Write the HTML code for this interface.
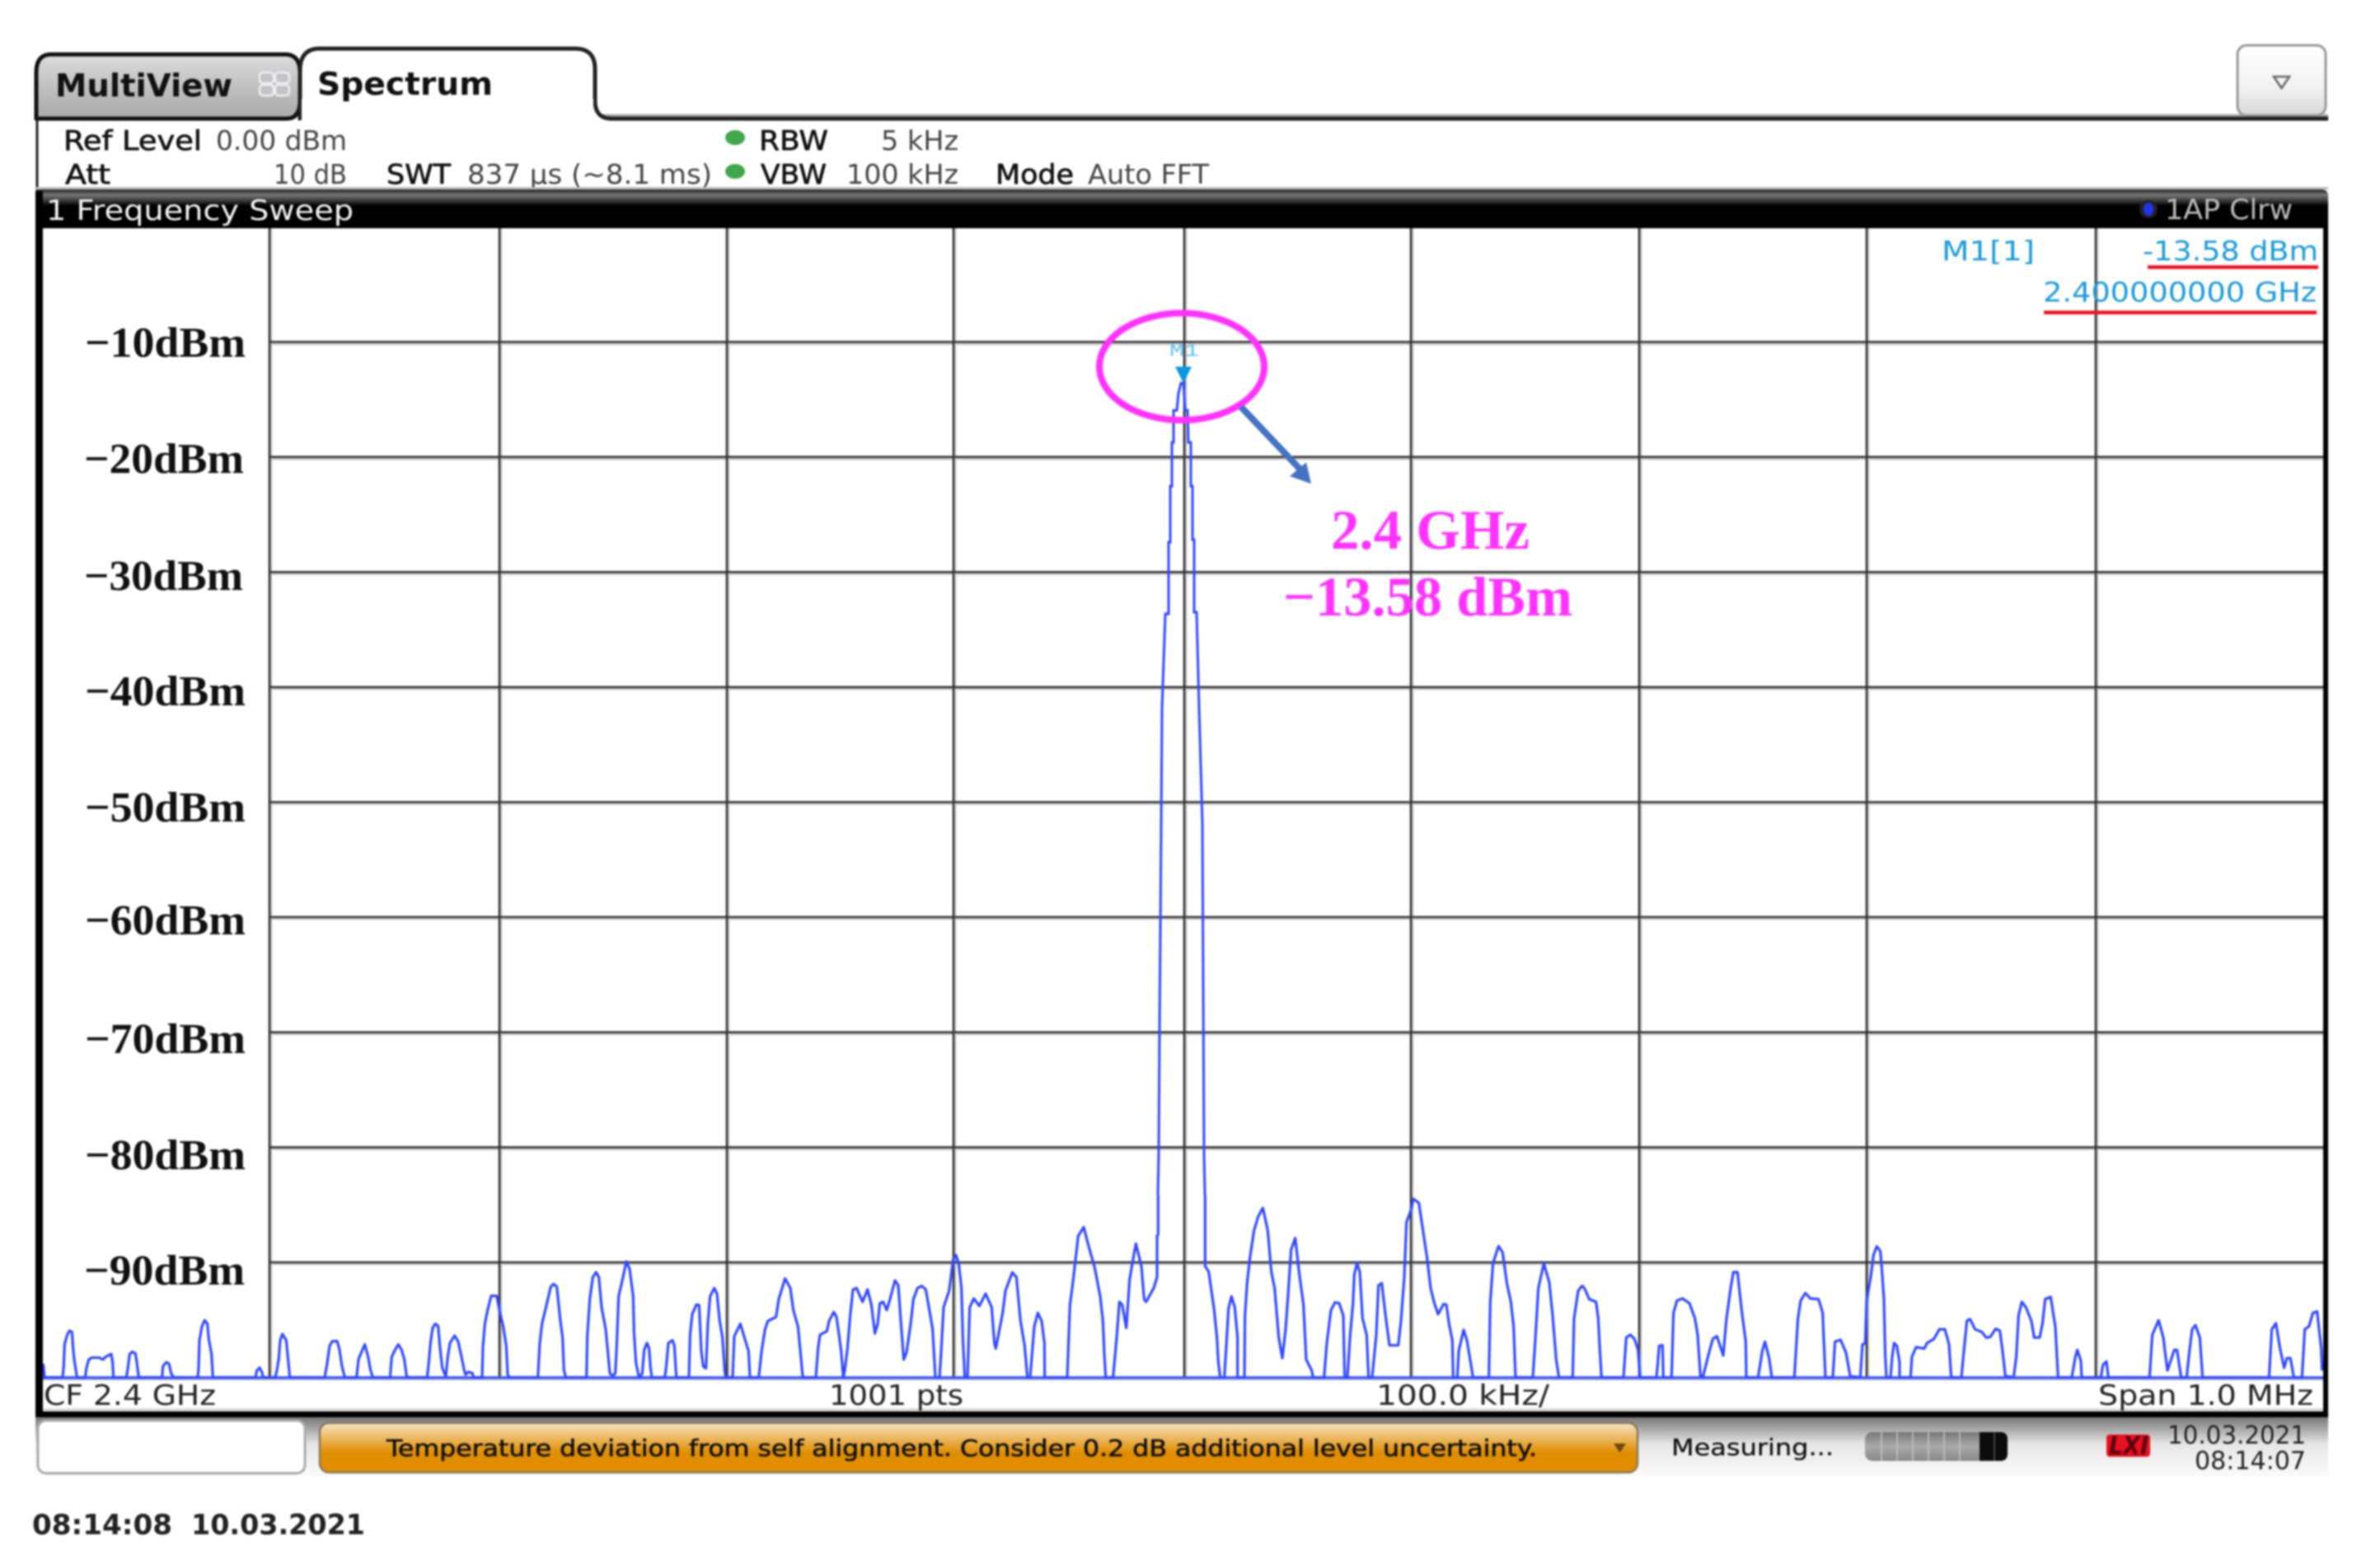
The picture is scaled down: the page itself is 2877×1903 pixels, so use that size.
<!DOCTYPE html>
<html>
<head>
<meta charset="utf-8">
<title>Spectrum</title>
<style>
html,body{margin:0;padding:0;background:#fff;width:2877px;height:1903px;overflow:hidden}
svg{display:block;filter:blur(1px)}
text{font-family:"DejaVu Sans","Liberation Sans",sans-serif;white-space:pre}
.lb{font-size:33px;fill:#111;stroke:#111;stroke-width:.7px}
.val{font-size:33px;fill:#444}
.bot{font-size:34px;fill:#222}
.cy{font-size:33px;fill:#1a9ad8}
.yl{font-family:"Liberation Serif",serif;font-weight:700;font-size:52px;fill:#111}
.mg{font-family:"Liberation Serif",serif;font-weight:700;font-size:68px;fill:#ff33ff}
.st{font-size:28px;fill:#111;stroke:#111;stroke-width:.6px}
.tr{fill:none;stroke:#3048ff;stroke-width:9.5;stroke-linejoin:round}
</style>
</head>
<body>
<svg xmlns="http://www.w3.org/2000/svg" width="2877" height="1903" viewBox="0 0 2877 1903">
<defs>
<linearGradient id="gTab" x1="0" y1="0" x2="0" y2="1"><stop offset="0" stop-color="#dcdcdc"/><stop offset=".5" stop-color="#c0c0c0"/><stop offset="1" stop-color="#a8a8a8"/></linearGradient>
<linearGradient id="gBand" x1="0" y1="0" x2="0" y2="1"><stop offset="0" stop-color="#222"/><stop offset=".14" stop-color="#777"/><stop offset=".42" stop-color="#000"/><stop offset="1" stop-color="#000"/></linearGradient>
<linearGradient id="gStat" x1="0" y1="0" x2="0" y2="1"><stop offset="0" stop-color="#777"/><stop offset=".45" stop-color="#e6e6e6"/><stop offset="1" stop-color="#fbfbfb"/></linearGradient>
<linearGradient id="gOr" x1="0" y1="0" x2="0" y2="1"><stop offset="0" stop-color="#f8e4c4"/><stop offset=".6" stop-color="#e08e00"/><stop offset="1" stop-color="#e08e00"/></linearGradient>
<linearGradient id="gBtn" x1="0" y1="0" x2="0" y2="1"><stop offset="0" stop-color="#fff"/><stop offset=".6" stop-color="#f2f2f2"/><stop offset="1" stop-color="#d8d8d8"/></linearGradient>
<linearGradient id="gPr" x1="0" y1="0" x2="0" y2="1"><stop offset="0" stop-color="#777"/><stop offset=".5" stop-color="#aaa"/><stop offset="1" stop-color="#888"/></linearGradient>
</defs>
<rect width="2877" height="1903" fill="#fff"/>

<!-- tabs -->
<path d="M720 143H2825" stroke="#aaa" stroke-width="3" fill="none" transform="translate(0,-3)"/>
<path d="M44 146V88Q44 66 62 66H346Q364 66 364 88V122Q364 144 348 144H44Z" fill="url(#gTab)" stroke="#111" stroke-width="5"/>
<path d="M364 146V86Q364 60 386 59H698Q722 59 722 84V122Q722 144 742 144H2825" fill="#fff" stroke="#222" stroke-width="5"/>
<path d="M366 146V120H720V146Z" fill="#fff"/>
<text x="67" y="117" font-size="38" font-weight="700" fill="#111" textLength="215" lengthAdjust="spacingAndGlyphs">MultiView</text>
<text x="385" y="115" font-size="38" font-weight="700" fill="#111" textLength="213" lengthAdjust="spacingAndGlyphs">Spectrum</text>
<g fill="#c4c4c8" stroke="#eeeef4" stroke-width="2.5"><rect x="315" y="88" width="17" height="13" rx="4"/><rect x="334" y="88" width="17" height="13" rx="4"/><rect x="315" y="103" width="17" height="13" rx="4"/><rect x="334" y="103" width="17" height="13" rx="4"/></g>

<!-- button -->
<rect x="2715" y="55" width="107" height="85" rx="11" fill="url(#gBtn)" stroke="#999" stroke-width="3"/>
<path d="M2759 93H2778L2768.500 107Z" fill="none" stroke="#666" stroke-width="2.500"/>

<!-- settings -->
<path d="M45 146V232" stroke="#222" stroke-width="3"/>
<text class="lb" x="77" y="182" textLength="168" lengthAdjust="spacingAndGlyphs">Ref Level</text>
<text class="val" x="262" y="182" textLength="159" lengthAdjust="spacingAndGlyphs">0.00 dBm</text>
<ellipse cx="892" cy="167" rx="12" ry="9" fill="#3fa64a"/>
<text class="lb" x="921" y="182" textLength="84" lengthAdjust="spacingAndGlyphs">RBW</text>
<text class="val" x="1069" y="182" textLength="94" lengthAdjust="spacingAndGlyphs">5 kHz</text>
<text class="lb" x="79" y="223" textLength="55" lengthAdjust="spacingAndGlyphs">Att</text>
<text class="val" x="332" y="223" textLength="89" lengthAdjust="spacingAndGlyphs">10 dB</text>
<text class="lb" x="469" y="223" textLength="78" lengthAdjust="spacingAndGlyphs">SWT</text>
<text class="val" x="567" y="223" textLength="297" lengthAdjust="spacingAndGlyphs">837 µs (~8.1 ms)</text>
<ellipse cx="892" cy="208" rx="12" ry="9" fill="#3fa64a"/>
<text class="lb" x="923" y="223" textLength="80" lengthAdjust="spacingAndGlyphs">VBW</text>
<text class="val" x="1027" y="223" textLength="136" lengthAdjust="spacingAndGlyphs">100 kHz</text>
<text class="lb" x="1208" y="223" textLength="95" lengthAdjust="spacingAndGlyphs">Mode</text>
<text class="val" x="1320" y="223" textLength="147" lengthAdjust="spacingAndGlyphs">Auto FFT</text>

<!-- band -->
<rect x="43" y="227" width="2782" height="3" fill="#bbb"/>
<path d="M43 232Q43 230 50 230H2817Q2825 230 2825 238V277H43Z" fill="url(#gBand)"/>
<text x="56" y="267" font-size="34" fill="#f4f4f4" textLength="373" lengthAdjust="spacingAndGlyphs">1 Frequency Sweep</text>
<circle cx="2607" cy="254" r="11" fill="#222"/><ellipse cx="2607" cy="254" rx="6" ry="8" fill="#2233ee"/>
<text x="2627" y="266" font-size="34" fill="#bbb" textLength="155" lengthAdjust="spacingAndGlyphs">1AP Clrw</text>

<!-- plot -->
<rect x="52" y="277" width="2767" height="1440" fill="#fff"/>
<g stroke="#cfcfcf" stroke-width="3" fill="none">
<path d="M327 557H2819M327 417.500H2819M327 696.500H2819M327 836H2819M327 975.500H2819M327 1115H2819M327 1255H2819M327 1394.500H2819M327 1534H2819M52 1674H2819"/>
<path d="M329 277V1672M608 277V1672M884 277V1672M1159 277V1672M1439 277V1672M1714 277V1672M1991 277V1672M2267 277V1672M2545 277V1672"/>
</g>
<g stroke="#333" stroke-width="2.600" fill="none">
<path d="M327 415H2819M327 554.600H2819M327 694.300H2819M327 833.900H2819M327 973.500H2819M327 1113H2819M327 1252.800H2819M327 1392.400H2819M327 1532H2819M52 1672H2819"/>
<path d="M327 277V1672M606 277V1672M882 277V1672M1157 277V1672M1437 277V1672M1712 277V1672M1989 277V1672M2265 277V1672M2543 277V1672"/>
</g>

<!-- y labels -->
<text class="yl" x="103" y="433" textLength="195" lengthAdjust="spacingAndGlyphs">−10dBm</text>
<text class="yl" x="102" y="574" textLength="194" lengthAdjust="spacingAndGlyphs">−20dBm</text>
<text class="yl" x="102" y="716" textLength="193" lengthAdjust="spacingAndGlyphs">−30dBm</text>
<text class="yl" x="103" y="856" textLength="195" lengthAdjust="spacingAndGlyphs">−40dBm</text>
<text class="yl" x="103" y="997" textLength="195" lengthAdjust="spacingAndGlyphs">−50dBm</text>
<text class="yl" x="103" y="1134" textLength="195" lengthAdjust="spacingAndGlyphs">−60dBm</text>
<text class="yl" x="103" y="1278" textLength="195" lengthAdjust="spacingAndGlyphs">−70dBm</text>
<text class="yl" x="103" y="1419" textLength="195" lengthAdjust="spacingAndGlyphs">−80dBm</text>
<text class="yl" x="102" y="1559" textLength="195" lengthAdjust="spacingAndGlyphs">−90dBm</text>

<!-- trace -->
<path d="M52 1672H2819" stroke="#3f55ff" stroke-width="3.500" fill="none"/>
<g transform="scale(.33333)">
<polyline class="tr" transform="translate(120,4350)" points="35,620 38,620 42,665 108,665 112,625 115,545 125,510 133,495 142,500 145,545 150,600 155,630 160,665 190,665 195,630 203,600 215,593 240,593 255,600 265,590 285,580 290,610 293,665 340,665 345,635 352,580 362,572 373,578 378,610 385,665 470,665 473,625 485,610 495,615 503,650 512,665 600,665 603,630 606,530 615,480 625,457 635,470 640,525 650,580 655,665 810,665 815,640 825,630 833,645 838,665 882,665 888,640 895,595 900,530 908,507 922,530 928,590 935,665 1062,665 1070,620 1080,550 1090,533 1107,533 1115,560 1125,625 1135,665 1178,665 1185,600 1195,575 1208,545 1220,590 1228,635 1237,665 1300,665 1306,590 1318,565 1330,545 1342,565 1352,600 1360,660 1367,665 1410,665"/>
<polyline class="tr" transform="translate(1530,4350)" points="0,665 25,665 30,620 37,540 45,485 55,470 65,478 72,560 80,630 90,655 93,660 100,590 108,540 125,513 138,535 150,590 160,640 165,655 175,645 190,650 193,665 225,665 228,555 235,470 245,420 258,368 278,368 290,430 302,480 313,550 318,655 325,665 428,665 435,540 443,470 455,420 475,335 485,325 497,335 510,460 518,520 523,640 530,665 605,665 608,515 617,380 628,300 640,282 650,300 660,410 675,490 683,575 690,650 700,660 710,650 715,550 722,370 738,300 750,243 762,270 775,370 778,500 785,610 795,660 800,665 808,650 815,565 825,540 833,560 838,630 843,665 890,665 895,630 903,540 918,530 925,550 932,665 978,665 982,510 990,435 1005,400 1015,402 1023,570 1030,625 1040,632 1047,465 1055,370 1070,340 1080,360 1090,460 1100,520 1108,640 1112,665 1137,665 1143,515 1165,470 1180,520 1195,570 1200,665 1232,665 1243,565 1255,490 1265,460 1295,445 1305,380 1328,305 1347,340 1358,420 1375,480 1392,660 1395,665 1410,665"/>
<polyline class="tr" transform="translate(2940,4350)" points="0,665 30,665 38,560 45,510 70,497 78,460 95,427 105,445 115,515 122,570 130,665 135,640 145,560 155,440 165,345 178,340 200,390 218,345 232,400 245,505 255,470 263,395 275,390 288,420 300,380 318,312 330,330 340,470 350,600 360,575 375,470 385,380 400,340 415,332 430,345 445,430 455,490 465,665 480,665 485,590 495,410 515,350 530,235 540,220 550,250 560,340 565,520 572,665 582,665 590,410 605,378 625,405 648,360 670,410 680,540 685,560 710,430 720,350 745,283 760,300 775,460 790,550 800,665 810,665 825,480 838,430 852,460 862,540 863,665 945,665 955,400 965,325 985,150 1005,118 1025,195 1045,265 1065,370 1075,460 1080,580 1085,665 1112,665 1125,520 1135,390 1145,400 1160,485 1172,310 1182,250 1195,178 1215,260 1225,380 1232,390 1260,340 1272,300 1272,150 1276,145 1276,0"/>
<polyline class="tr" transform="translate(4350,4350)" points="37,0 37,260 50,280 60,350 70,420 80,520 85,610 92,665 107,665 115,535 122,415 133,370 145,410 155,520 155,665 180,665 182,440 190,320 200,230 215,130 230,80 247,48 265,130 278,280 290,340 305,520 318,595 330,490 340,350 350,200 365,158 380,290 395,400 405,600 425,640 430,665 470,665 480,540 495,420 510,392 525,395 540,440 545,665 555,665 565,510 575,400 580,290 590,250 600,280 610,450 625,510 632,665 645,665 660,510 668,330 680,322 695,450 708,548 740,548 750,460 762,300 770,100 785,60 795,15 815,30 830,130 845,230 858,340 870,390 885,435 905,398 915,400 925,470 937,530 940,665 955,665 960,570 978,492 990,530 1005,620 1012,665 1070,665 1075,390 1085,250 1105,187 1120,210 1135,320 1150,390 1160,480 1167,665 1230,665 1240,510 1250,340 1270,250 1290,320 1302,440 1315,600 1325,665 1375,665 1380,450 1395,350 1410,330"/>
<polyline class="tr" transform="translate(5760,4350)" points="0,330 10,345 25,380 50,390 58,450 65,585 70,665 150,665 160,520 175,510 190,525 203,565 210,665 270,665 275,610 280,550 292,548 295,665 325,665 332,430 345,385 365,378 390,395 410,450 420,510 430,660 440,660 460,580 475,525 490,515 513,585 525,450 540,340 550,282 565,282 580,420 595,535 597,665 640,665 655,570 665,535 680,595 690,665 772,665 785,450 795,385 812,358 830,378 860,380 875,430 885,665 912,665 920,535 940,528 960,575 975,660 1012,665 1020,545 1030,540 1035,385 1050,300 1060,220 1072,188 1085,205 1090,265 1098,380 1103,590 1107,665 1122,665 1128,590 1135,540 1145,550 1155,610 1155,665 1195,665 1200,590 1215,555 1245,560 1255,540 1280,525 1300,490 1320,490 1335,545 1343,665 1380,665 1390,560 1400,460 1410,452"/>
<polyline class="tr" transform="translate(7170,4350)" points="0,450 20,490 45,500 60,520 75,518 95,488 110,495 120,570 130,660 160,665 170,590 178,440 190,390 205,410 225,460 235,520 255,520 265,470 275,380 295,372 312,480 322,665 372,665 385,590 392,565 405,605 408,665 478,665 485,620 498,607 505,665 655,665 665,510 688,457 705,520 720,640 745,565 755,565 770,665 790,665 800,570 810,490 822,475 838,520 848,665 1090,665 1100,490 1115,468 1130,560 1145,630 1155,595 1168,595 1180,665 1210,665 1220,490 1235,480 1250,430 1265,425 1280,560 1283,640"/>
</g>
<polyline fill="none" stroke="#3048ff" stroke-width="3" points="1405,1450 1406,1400 1407,1250 1409,1000 1410,860 1414,745 1418,745 1418,658 1420,658 1420,590 1422,590 1422,537 1424,537 1424,498 1428,498 1430,477 1433,465 1436,465 1438,498 1441,498 1442,537 1445,537 1445,590 1447,590 1447,655 1449,655 1449,743 1452,743 1455,860 1459,1000 1461,1400 1462,1450"/>

<!-- marker -->
<text x="1419" y="432" font-size="22" fill="#5fc3ee" textLength="36" lengthAdjust="spacingAndGlyphs" style="font-family:'Liberation Mono',monospace">M1</text>
<path d="M1426 445H1446L1436 465Z" fill="#0a96e0"/>
<ellipse cx="1434" cy="445" rx="100" ry="65" fill="none" stroke="#ff33ff" stroke-width="8"/>
<path d="M1506 494L1578 570" stroke="#4472c4" stroke-width="8" fill="none"/>
<path d="M1591 587L1585 561L1565 578Z" fill="#4472c4"/>
<text class="mg" x="1615" y="666" textLength="241" lengthAdjust="spacingAndGlyphs">2.4 GHz</text>
<text class="mg" x="1557" y="747" textLength="351" lengthAdjust="spacingAndGlyphs">−13.58 dBm</text>

<!-- marker readout -->
<text class="cy" x="2356" y="316" textLength="113" lengthAdjust="spacingAndGlyphs">M1[1]</text>
<text class="cy" x="2600" y="316" textLength="213" lengthAdjust="spacingAndGlyphs">-13.58 dBm</text>
<text class="cy" x="2479" y="366" textLength="332" lengthAdjust="spacingAndGlyphs">2.400000000 GHz</text>
<rect x="2606" y="322" width="207" height="4.500" fill="#f01020"/>
<rect x="2480" y="377" width="331" height="4.500" fill="#f01020"/>

<!-- frame -->
<rect x="43" y="232" width="9" height="1488" fill="#000"/>
<rect x="2819" y="277" width="6" height="1443" fill="#000"/>
<rect x="43" y="1713" width="2782" height="7" fill="#000"/>
<rect x="52" y="1709" width="2767" height="4" fill="#ddd"/>

<!-- bottom scale -->
<text class="bot" x="53" y="1705" textLength="209" lengthAdjust="spacingAndGlyphs">CF 2.4 GHz</text>
<text class="bot" x="1006" y="1705" textLength="163" lengthAdjust="spacingAndGlyphs">1001 pts</text>
<text class="bot" x="1670" y="1705" textLength="210" lengthAdjust="spacingAndGlyphs">100.0 kHz/</text>
<text class="bot" x="2546" y="1705" textLength="261" lengthAdjust="spacingAndGlyphs">Span 1.0 MHz</text>

<!-- status bar -->
<rect x="43" y="1720" width="2782" height="72" fill="url(#gStat)"/>
<rect x="46" y="1724" width="324" height="64" rx="10" fill="#fff" stroke="#aaa" stroke-width="3"/>
<rect x="388" y="1727" width="1599" height="60" rx="11" fill="url(#gOr)" stroke="#8a7a60" stroke-width="2.500"/>
<text class="st" x="469" y="1767" textLength="1396" lengthAdjust="spacingAndGlyphs">Temperature deviation from self alignment. Consider 0.2 dB additional level uncertainty.</text>
<path d="M1958 1752H1973L1965.500 1763Z" fill="#6b4a10"/>
<text class="st" x="2028" y="1766" textLength="197" lengthAdjust="spacingAndGlyphs" style="stroke-width:.3px">Measuring...</text>
<rect x="2263" y="1738" width="173" height="35" rx="9" fill="url(#gPr)"/>
<g stroke="#c4c4c4" stroke-width="1.500"><path d="M2283 1738V1773M2302 1738V1773M2321 1738V1773M2340 1738V1773M2359 1738V1773M2378 1738V1773"/></g>
<path d="M2402 1738H2427Q2436 1738 2436 1747V1764Q2436 1773 2427 1773H2402Z" fill="#0c0c0c"/>
<path d="M2420 1738V1773" stroke="#555" stroke-width="1.500"/>
<rect x="2556" y="1741" width="53" height="27" rx="4" fill="#e8101e"/>
<text x="2559" y="1765" font-size="30" font-weight="700" font-style="italic" fill="#5a0010" textLength="48" lengthAdjust="spacingAndGlyphs">LXI</text>
<text class="val" x="2630" y="1752" style="fill:#222;font-size:30px" textLength="168" lengthAdjust="spacingAndGlyphs">10.03.2021</text>
<text class="val" x="2663" y="1783" style="fill:#222;font-size:30px" textLength="135" lengthAdjust="spacingAndGlyphs">08:14:07</text>

<!-- footer -->
<text x="39" y="1862" font-size="34" font-weight="700" fill="#222" textLength="170" lengthAdjust="spacingAndGlyphs">08:14:08</text>
<text x="232" y="1862" font-size="34" font-weight="700" fill="#222" textLength="211" lengthAdjust="spacingAndGlyphs">10.03.2021</text>
</svg>
</body>
</html>
